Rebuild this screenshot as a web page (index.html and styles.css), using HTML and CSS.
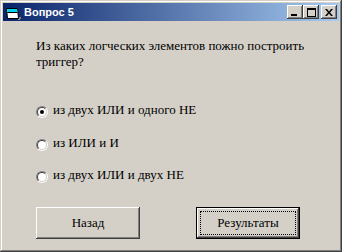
FILE: index.html
```html
<!DOCTYPE html>
<html lang="ru">
<head>
    <meta charset="UTF-8">
    <title>Вопрос 5</title>
    <link rel="stylesheet" href="styles.css">
</head>
<body>
    <div class="window">
        <div class="titlebar">
            <svg class="app-icon" width="16" height="16" viewBox="0 0 16 16">
                <path d="M1.5 3.5h11l1 10h-11z" fill="#fff" stroke="#000"/>
                <path d="M2 4h10l0.4 3h-10z" fill="#00d0f0"/>
                <path d="M2.3 7.5h10.2" stroke="#000"/>
                <rect x="14" y="12" width="2" height="2" fill="#808080"/>
                <rect x="13" y="14" width="2" height="1" fill="#a0a0a0"/>
            </svg>
            <span class="caption">Вопрос 5</span>
            <div class="caption-buttons">
                <button class="cap-btn">
                    <svg width="8" height="7" viewBox="0 0 8 7"><rect x="0" y="5" width="6" height="2" fill="#000"/></svg>
                </button>
                <button class="cap-btn">
                    <svg width="9" height="9" viewBox="0 0 9 9"><rect x="0.5" y="0.5" width="8" height="8" fill="none" stroke="#000"/><rect x="0" y="1" width="9" height="1" fill="#000"/></svg>
                </button>
                <button class="cap-btn close">
                    <svg width="8" height="7" viewBox="0 0 8 7"><path d="M0 0h2l2 2.5 2-2.5h2l-3 3.5 3 3.5h-2l-2-2.5-2 2.5h-2l3-3.5z" fill="#000"/></svg>
                </button>
            </div>
        </div>

        <div class="content">
            <p class="question">Из каких логческих элементов пожно построить<br>триггер?</p>

            <div class="options">
                <label class="option"><span class="radio checked"></span>из двух ИЛИ и одного НЕ</label>
                <label class="option"><span class="radio"></span>из ИЛИ и И</label>
                <label class="option"><span class="radio"></span>из двух ИЛИ и двух НЕ</label>
            </div>

            <div class="actions">
                <button class="btn">Назад</button>
                <button class="btn default"><span class="focus">Результаты</span></button>
            </div>
        </div>
    </div>
</body>
</html>
```

FILE: styles.css
```css
body {
    margin: 0;
    background: #d4d0c8;
}
.window {
    width: 342px;
    height: 252px;
    box-sizing: border-box;
    padding: 3px;
    background: #d4d0c8;
    box-shadow: inset -1px -1px #404040, inset 1px 1px #d4d0c8,
                inset -2px -2px #808080, inset 2px 2px #fff;
}
.titlebar {
    height: 18px;
    display: flex;
    align-items: center;
    padding: 0 2px;
    background: linear-gradient(to right, #0a246a, #a6caf0);
}
.app-icon {
    margin-right: 3px;
    margin-top: 1px;
}
.caption {
    font-family: "Liberation Sans", Arial, sans-serif;
    font-weight: bold;
    font-size: 11px;
    color: #fff;
}
.caption-buttons {
    margin-left: auto;
    display: flex;
}
.cap-btn {
    width: 16px;
    height: 14px;
    padding: 0;
    border: 0;
    background: #d4d0c8;
    display: flex;
    align-items: center;
    justify-content: center;
    box-shadow: inset -1px -1px #404040, inset 1px 1px #fff,
                inset -2px -2px #808080, inset 2px 2px #d4d0c8;
}
.cap-btn.close {
    margin-left: 2px;
}
.content {
    padding: 17px 0 0 33px;
    font-family: "Liberation Serif", "Times New Roman", serif;
    font-size: 13px;
    line-height: 16px;
    color: #000;
}
.question {
    margin: 0;
}
.options {
    margin-top: 32px;
    display: flex;
    flex-direction: column;
    gap: 16.5px;
}
.option {
    display: flex;
    align-items: flex-start;
}
.radio {
    width: 12px;
    height: 12px;
    box-sizing: border-box;
    margin: 4px 5px 0 0;
    border-radius: 50%;
    border: 1px solid;
    border-color: #808080 #fff #fff #808080;
    position: relative;
}
.radio::before {
    content: "";
    position: absolute;
    inset: 0;
    border-radius: 50%;
    border: 1px solid;
    border-color: #404040 #d4d0c8 #d4d0c8 #404040;
    background: #fff;
}
.radio.checked::after {
    content: "";
    position: absolute;
    left: 3px;
    top: 3px;
    width: 4px;
    height: 4px;
    border-radius: 50%;
    background: #000;
}
.actions {
    margin-top: 24px;
    display: flex;
    gap: 56px;
}
.btn {
    width: 104px;
    height: 32px;
    padding: 0;
    border: 0;
    background: #d4d0c8;
    font-family: "Liberation Serif", "Times New Roman", serif;
    font-size: 13px;
    color: #000;
    box-shadow: inset -1px -1px #404040, inset 1px 1px #fff,
                inset -2px -2px #808080, inset 2px 2px #d4d0c8;
}
.btn.default {
    box-shadow: inset 0 0 0 1px #000, inset -2px -2px #404040, inset 2px 2px #fff,
                inset -3px -3px #808080;
    display: flex;
    padding: 4px;
}
.focus {
    flex: 1;
    display: flex;
    align-items: center;
    justify-content: center;
    outline: 1px dotted #000;
    outline-offset: -1px;
}
```
